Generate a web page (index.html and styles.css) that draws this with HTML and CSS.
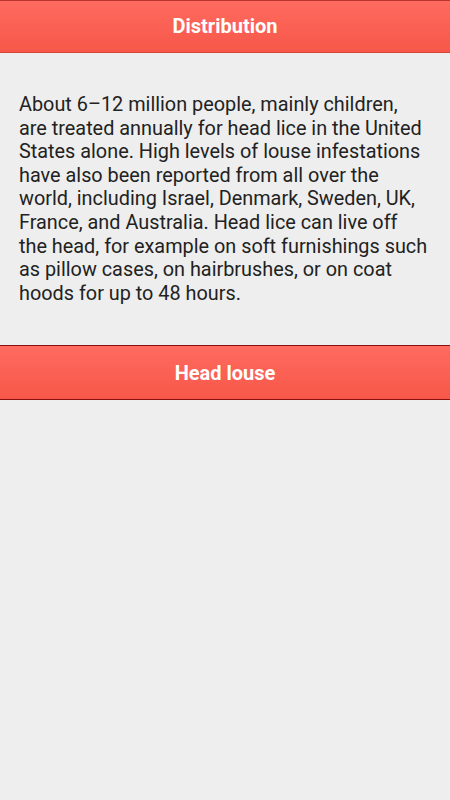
FILE: index.html
```html
<!DOCTYPE html>
<html>
<head>
<meta charset="utf-8">
<link rel="stylesheet" href="styles.css">
</head>
<body>
<div class="bar bar-top">Distribution</div>
<section class="content">
<p class="text">About 6–12 million people, mainly children, are treated annually for head lice in the United States alone. High levels of louse infestations have also been reported from all over the world, including Israel, Denmark, Sweden, UK, France, and Australia. Head lice can live off the head, for example on soft furnishings such as pillow cases, on hairbrushes, or on coat hoods for up to 48 hours.</p>
</section>
<div class="bar bar-second">Head louse</div>
</body>
</html>
```
FILE: styles.css
```css
html, body {
  margin: 0;
  padding: 0;
  background: #eeeeee;
  font-family: Roboto, "Noto Sans", sans-serif;
}
.bar {
  display: flex;
  align-items: center;
  justify-content: center;
  color: #ffffff;
  font-weight: 700;
  font-size: 20px;
  background: linear-gradient(to bottom, #ff6b60, #f65748);
}
.bar-top {
  height: 49px;
  padding-bottom: 2px;
  border-top: 1px solid #b8352b;
  border-bottom: 1px solid #d44638;
}
.bar-second {
  height: 53px;
  border-top: 1px solid #8a1010;
  border-bottom: 1px solid #8a1010;
}
.content {
  padding: 40px 20px 40px 19px;
}
.text {
  margin: 0;
  font-size: 19.85px;
  line-height: 23.6px;
  color: #222222;
}
```
